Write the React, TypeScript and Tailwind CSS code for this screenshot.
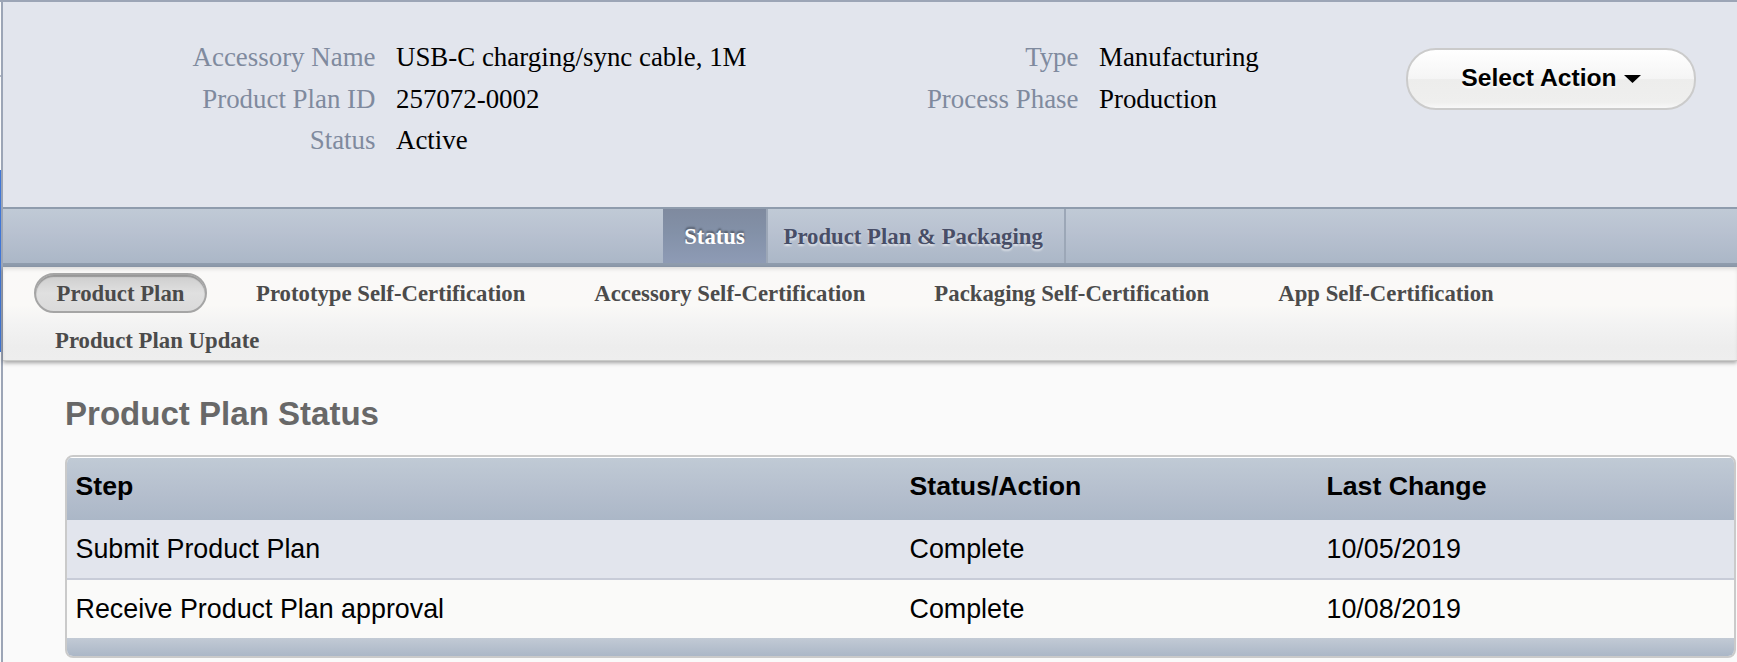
import type { ReactNode } from 'react';

const subNav = [
  'Prototype Self-Certification',
  'Accessory Self-Certification',
  'Packaging Self-Certification',
  'App Self-Certification',
];

const steps = [
  { step: 'Submit Product Plan', status: 'Complete', changed: '10/05/2019' },
  { step: 'Receive Product Plan approval', status: 'Complete', changed: '10/08/2019' },
];

interface FieldProps {
  label: string;
  children: ReactNode;
}

function Field({ label, children }: FieldProps) {
  return (
    <>
      <dt className="text-right text-[#7f8a9e]">{label}</dt>
      <dd className="text-black">{children}</dd>
    </>
  );
}

function Header() {
  return (
    <header className="flex h-[205px] bg-[#e2e5ed] pt-[35px] text-[26.9px] leading-[41.5px] whitespace-nowrap">
      <dl className="grid w-[803px] grid-cols-[372.5px_1fr] content-start gap-x-[20.5px]">
        <Field label="Accessory Name">USB-C charging/sync cable, 1M</Field>
        <Field label="Product Plan ID">257072-0002</Field>
        <Field label="Status">Active</Field>
      </dl>
      <dl className="grid w-[600px] grid-cols-[272.5px_1fr] content-start gap-x-[20.5px]">
        <Field label="Type">Manufacturing</Field>
        <Field label="Process Phase">Production</Field>
      </dl>
      <button className="mt-[11px] flex h-[62px] w-[290px] items-center justify-center gap-[7px] rounded-[30px] border-2 border-[#cbcbcb] bg-[linear-gradient(#ffffff,#f5f5f5_49%,#ededec_51%,#efefee_90%,#f8f8f8)] pb-[2px] font-['Liberation_Sans',sans-serif] text-[24.67px] font-bold text-black [text-shadow:0_2px_2px_#fff]">
        Select Action
        <svg width="17" height="8" viewBox="0 0 17 8" className="mt-[2px]">
          <path d="M0 0h17L8.5 8z" fill="#000" />
        </svg>
      </button>
    </header>
  );
}

function MainTabs() {
  return (
    <nav className="flex h-[60px] border-t-2 border-b-4 border-[#8f9cad] bg-[linear-gradient(#c0cad6,#b8c1d0_45%,#abb7c7)] pl-[660px] text-[22.75px] leading-[55px] font-bold">
      <a className="w-[103px] bg-[linear-gradient(#7f8a9f,#8391a8_45%,#8e9bb5)] text-center text-white [text-shadow:0_-2px_2px_rgba(0,0,0,0.4)]">
        Status
      </a>
      <a className="w-[300px] border-x-2 border-[#9ca7b7] pl-[15.5px] text-[#484e67] [text-shadow:0_2px_2px_rgba(255,255,255,0.6)]">
        Product Plan &amp; Packaging
      </a>
    </nav>
  );
}

function SubNav() {
  return (
    <nav className="relative h-[94px] bg-[linear-gradient(#faf9f8,#faf9f7_40%,#f3f3f3_60%,#ededed_85%,#eeeeee)] pt-[6px] pl-[31px] text-[22.75px] leading-[38px] font-bold text-[#4b4b4b] shadow-[0_2px_4px_rgba(0,0,0,0.35),inset_0_3px_4px_-1px_rgba(0,0,0,0.12),inset_0_-1px_0_#c9cac8]">
      <div className="flex whitespace-nowrap">
        <a className="mr-[49px] h-10 w-[173px] rounded-full border-2 border-[#a5a5a5] bg-[linear-gradient(#cdcdcd,#e0e0e0_50%,#dadada)] text-center shadow-[inset_0_2px_1px_#979797]">
          Product Plan
        </a>
        <div className="flex gap-[69px] pt-[2px]">
          {subNav.map((item) => (
            <a key={item}>{item}</a>
          ))}
        </div>
      </div>
      <a className="ml-[21px] block pt-[9px]">Product Plan Update</a>
    </nav>
  );
}

function StatusTable() {
  const columns = 'grid grid-cols-[834px_417px_1fr] pl-[8.5px]';
  return (
    <div className="w-[1671px] overflow-hidden rounded-lg border-2 border-[#cacaca] text-[26.85px] text-black">
      <div className={`${columns} h-[63px] border-t border-white bg-[linear-gradient(#c0cad5,#b4becd_60%,#abb7c7)] text-[26.67px] leading-[56px] font-bold`}>
        <span>Step</span>
        <span>Status/Action</span>
        <span>Last Change</span>
      </div>
      {steps.map(({ step, status, changed }) => (
        <div
          key={step}
          className={`${columns} h-[58px] leading-[58px] odd:bg-[#fafaf9] even:h-[60px] even:border-b-2 even:border-[#c8ccd8] even:bg-[#e2e5ed]`}
        >
          <span>{step}</span>
          <span>{status}</span>
          <span>{changed}</span>
        </div>
      ))}
      <div className="h-[18px] bg-[linear-gradient(#c2cad5,#abb7c7)]" />
    </div>
  );
}

export default function App() {
  return (
    <div className="flex h-[662px] overflow-hidden border-t-2 border-[#9ca5b6] bg-[#fafafa] font-['Liberation_Serif',serif]">
      <div className="flex w-[3px] shrink-0 flex-col border-r-2 border-[#9ca5b6]">
        <div className="mt-[73px] h-[2px] bg-[#b4bac6]" />
        <div className="mt-[93px] h-[182px] bg-[#3f76d6]" />
      </div>
      <main className="w-[1734px]">
        <Header />
        <MainTabs />
        <SubNav />
        <section className="pt-[33px] pl-[62px] font-['Liberation_Sans',sans-serif]">
          <h1 className="mb-[21px] text-[33.05px] leading-10 font-bold text-[#686868]">Product Plan Status</h1>
          <StatusTable />
        </section>
      </main>
    </div>
  );
}
